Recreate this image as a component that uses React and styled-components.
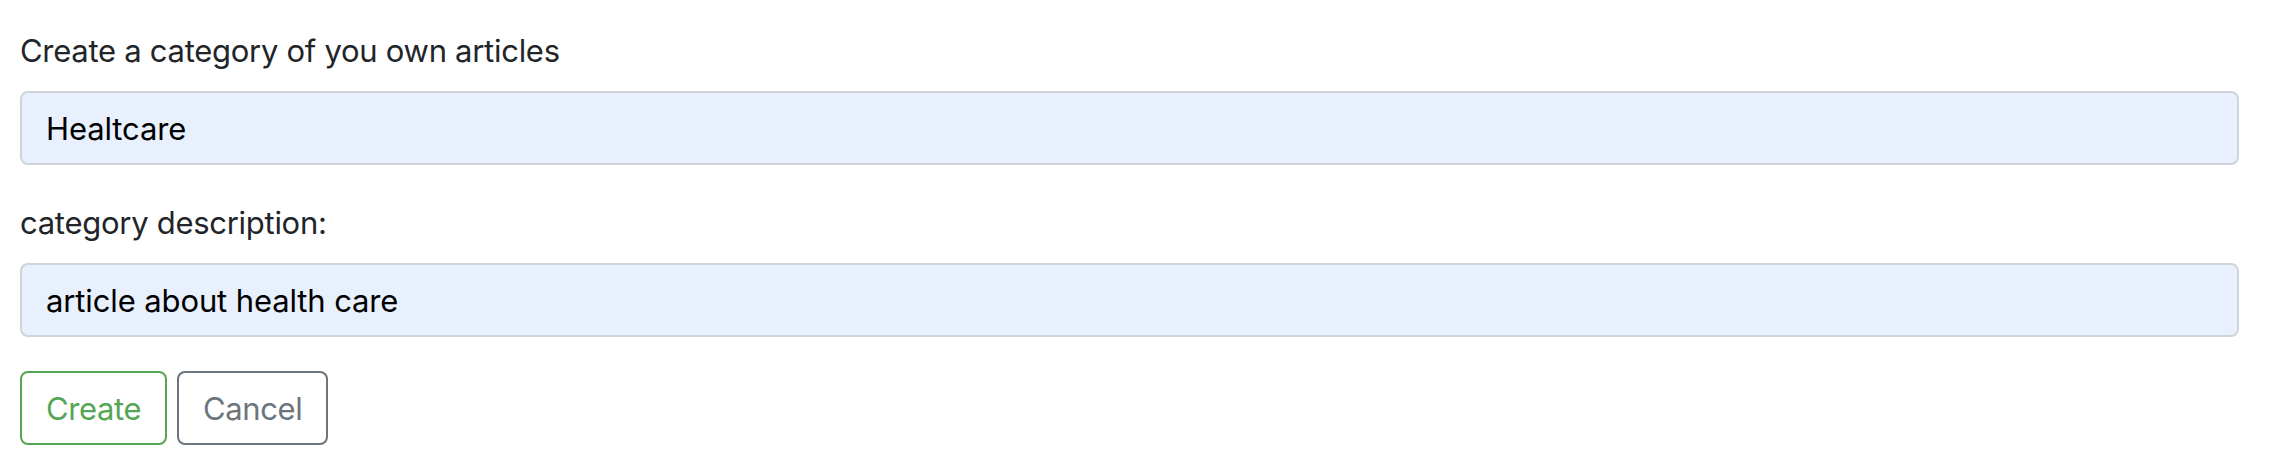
import React from "react";
import styled, { createGlobalStyle } from "styled-components";

const GlobalStyle = createGlobalStyle`
  html, body {
    margin: 0;
    padding: 0;
    background: #ffffff;
  }
  body {
    font-family: Inter, "Liberation Sans", Arial, sans-serif;
  }
  * { box-sizing: border-box; }
`;

const Page = styled.form`
  padding: 27px 35px 0 20px;
`;

const Group = styled.div`
  margin-bottom: 34px;
`;

const Label = styled.label`
  display: block;
  font-size: 31px;
  line-height: 48px;
  letter-spacing: -0.28px;
  margin-bottom: 16px;
  color: #212529;
`;

const Input = styled.input`
  display: block;
  width: 100%;
  height: 74px;
  padding: 0 24px;
  font-family: inherit;
  font-size: 31px;
  letter-spacing: -0.12px;
  color: #000000;
  background: #e8f0fe;
  border: 2px solid #ced4da;
  border-radius: 8px;
  outline: none;
`;

const Actions = styled.div`
  display: flex;
  gap: 10px;
`;

const Button = styled.button`
  height: 74px;
  padding: 0 24px;
  font-family: inherit;
  font-size: 31px;
  letter-spacing: -0.4px;
  background: transparent;
  color: ${(p) => p.$color};
  border: 2px solid ${(p) => p.$color};
  border-radius: 8px;
  cursor: pointer;
`;

export default function App() {
  return (
    <>
      <GlobalStyle />
      <Page onSubmit={(e) => e.preventDefault()}>
        <Group>
          <Label htmlFor="name">Create a category of you own articles</Label>
          <Input id="name" defaultValue="Healtcare" />
        </Group>
        <Group>
          <Label htmlFor="desc">category description:</Label>
          <Input id="desc" defaultValue="article about health care" />
        </Group>
        <Actions>
          <Button type="submit" $color="#54a654">Create</Button>
          <Button type="button" $color="#6c757d">Cancel</Button>
        </Actions>
      </Page>
    </>
  );
}
